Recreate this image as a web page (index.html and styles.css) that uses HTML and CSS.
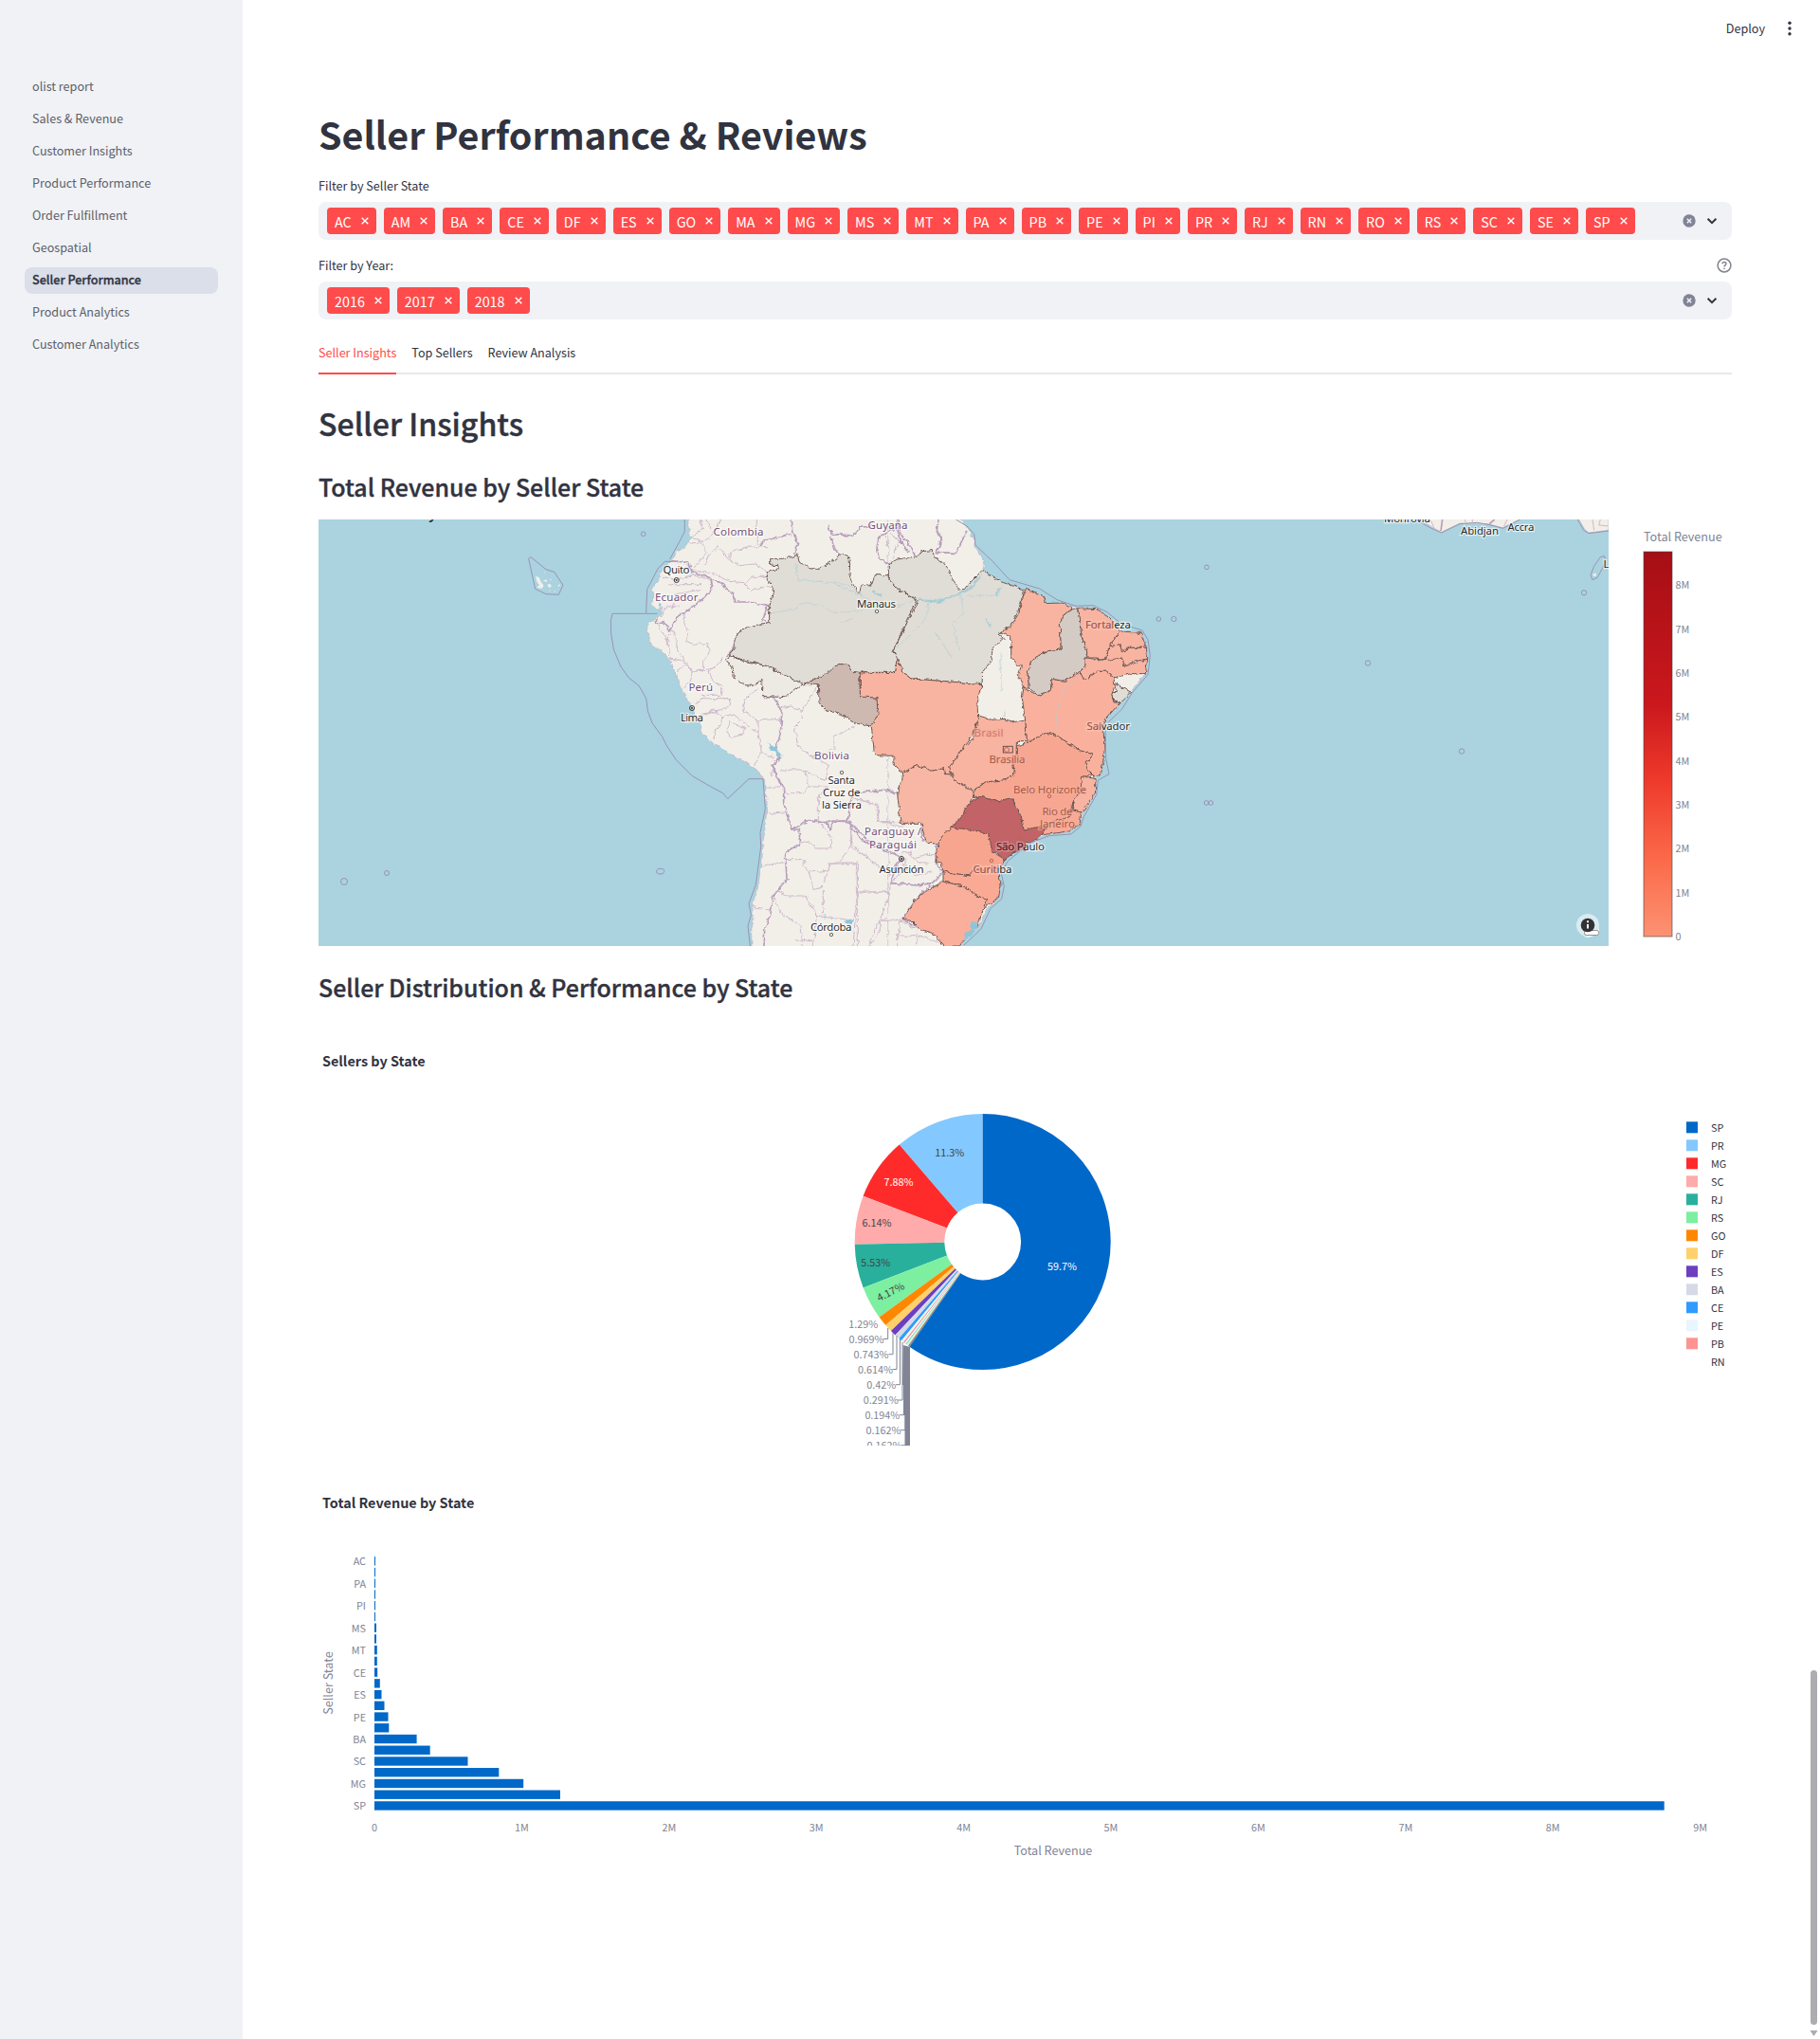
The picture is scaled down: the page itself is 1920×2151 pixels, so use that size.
FILE: index.html
```html
<!DOCTYPE html>
<html lang="en">
<head>
<meta charset="utf-8">
<title>Seller Performance</title>
<link rel="stylesheet" href="styles.css">
</head>
<body>
<div class="app">
  <nav class="sidebar">
    <a class="nav-item">olist report</a>
    <a class="nav-item">Sales &amp; Revenue</a>
    <a class="nav-item">Customer Insights</a>
    <a class="nav-item">Product Performance</a>
    <a class="nav-item">Order Fulfillment</a>
    <a class="nav-item">Geospatial</a>
    <a class="nav-item active">Seller Performance</a>
    <a class="nav-item">Product Analytics</a>
    <a class="nav-item">Customer Analytics</a>
  </nav>
  <div class="page">
    <header class="toolbar">
      <span class="deploy">Deploy</span>
      <svg class="dots" width="6" height="16" viewBox="0 0 6 16"><circle cx="3" cy="2.3" r="1.7"/><circle cx="3" cy="8" r="1.7"/><circle cx="3" cy="13.7" r="1.7"/></svg>
    </header>
    <main class="content">
      <h1>Seller Performance &amp; Reviews</h1>

      <div class="label">Filter by Seller State</div>
      <div class="select">
        <div class="tags" id="states"></div>
        <svg class="controls" width="40" height="16" viewBox="0 0 40 16"><circle class="clear" cx="8" cy="8" r="6.7"/><path class="clear-x" d="M5.8 5.8l4.4 4.4M10.2 5.8l-4.4 4.4"/><path class="chevron" d="M27.6 5.8l4.4 4.4 4.4-4.4"/></svg>
      </div>

      <div class="label year">Filter by Year:
        <svg width="16" height="16" viewBox="0 0 16 16"><circle class="help" cx="8" cy="8" r="6.9"/><path class="help" d="M6 6.3c0-2.6 4.1-2.5 4 0 0 1.500-2 1.500-2 3.100M8 10.700v1.300"/></svg>
      </div>
      <div class="select">
        <div class="tags" id="years"></div>
        <svg class="controls" width="40" height="16" viewBox="0 0 40 16"><circle class="clear" cx="8" cy="8" r="6.7"/><path class="clear-x" d="M5.8 5.8l4.400 4.400M10.200 5.800l-4.400 4.400"/><path class="chevron" d="M27.600 5.800l4.400 4.400 4.400-4.400"/></svg>
      </div>

      <div class="tabs"><span class="tab selected">Seller Insights</span><span class="tab">Top Sellers</span><span class="tab">Review Analysis</span></div>

      <h2>Seller Insights</h2>
      <h3>Total Revenue by Seller State</h3>

      <svg class="chart" width="1491" height="450" viewBox="0 0 1491 450">
        <defs>
          <clipPath id="mapclip"><rect width="1361" height="450"/></clipPath>
          <filter id="rough" x="-5%" y="-5%" width="110%" height="110%" color-interpolation-filters="sRGB"><feTurbulence type="fractalNoise" baseFrequency="0.06" numOctaves="3" seed="4"/><feDisplacementMap in="SourceGraphic" scale="15" xChannelSelector="R" yChannelSelector="G"/></filter>
          <linearGradient id="reds" x1="0" y1="1" x2="0" y2="0"><stop offset="0" stop-color="#fc9272"/><stop offset=".2" stop-color="#fb6a4a"/><stop offset=".4" stop-color="#ef3b2c"/><stop offset=".6" stop-color="#cb181d"/><stop offset="1" stop-color="#a50f15"/></linearGradient>
        </defs>
        <g clip-path="url(#mapclip)">
          <rect width="1361" height="450" fill="#aad3df"/>
          <text class="plot-title" x="4" y="0">Total Revenue by Seller State</text>
          <!-- Pacific side of the continent -->
          <g transform="translate(204 -8) scale(.33333)">
            <g filter="url(#rough)">
              <path class="land" d="M556 0L560 70 575 80 556 98 545 116 520 122 515 145 497 160 480 178 470 190 462 225 443 240 450 262 442 290 455 310 480 300 470 325 430 355 428 375 438 400 432 412 460 428 485 452 510 490 535 560 560 600 580 640 600 680 597 692 640 735 690 765 760 805 795 840 800 850 806 950 800 1010 790 1080 788 1130 778 1190 760 1240 765 1285 758 1330 760 1400H1220V0Z"/>
              <path class="province" d="M595 24L605 50 570 80 600 95 615 130 590 160 570 185 640 195 690 220 740 225 760 205 820 205M605 95L640 70 660 24M640 70L615 24M600 95L560 100M650 110L690 155 690 130 740 112 810 110M690 155L720 170 770 165 800 185 815 190M775 24V105M735 225L760 250 800 235 832 240M650 110L620 140 610 170M540 150L570 185M480 205L520 215 570 200 630 215M495 230H600M480 270L520 260 600 245M520 260L510 310M470 330L490 300 530 300M550 320L545 350 560 390 550 410 580 420 620 415 625 450 605 470 605 500 570 505 545 470 525 440 515 380 490 370M515 380L490 400 500 440 495 465 540 470M460 350L485 400 500 410M515 510L545 485 580 505 640 495 670 460M540 560L565 540 570 505M620 500L640 540 665 550 665 580 600 580M580 610L600 590 690 590 695 610 660 630 600 640M600 650L640 625 665 650 660 680 640 690 640 720M665 650L700 640 780 700 780 660 730 630 740 590 780 560M780 660L850 655M690 665L740 685 735 700 695 715 680 695ZM780 700L790 760 765 805M790 760L830 780 820 840M850 620L885 615 915 630 970 550M915 630L920 655 895 680 905 740 950 775 1000 760 1020 750 1020 710 1090 678M950 775L1000 800 990 850 930 820 900 815 850 820M930 820L940 870 920 890 870 890 830 815M940 870L1000 870 970 900 970 980 1010 1030 1010 1065 960 1065 940 1040 905 1050M805 870L850 870M810 955L870 950M788 1125L860 1105M865 1100L930 1100 920 1120 940 1140 1000 1135 980 1190 955 1195 940 1140M1000 1135L1010 1113 1093 1113V1203H1200M1073 1000V1055L1035 1110M1073 1055L1110 1080 1170 1130M845 1200L870 1215 930 1215 965 1280 1060 1290M830 1220L850 1268 915 1310 920 1374M965 1280L955 1374M985 1200L985 1270M1093 1203L1080 1374M1200 1280L1160 1300 1130 1374M765 1250L820 1260M900 1355H960M1080 905L1160 930 1160 980 1200 985"/>
              <path class="nation" d="M497 155L560 160 570 190 630 210 635 240 600 280 560 310 525 330 500 375 480 350 455 355 460 335M635 215L660 225 700 260 705 285 745 285 810 295 795 340 815 352 770 363 720 380 700 430 680 460M885 24L890 60 905 100 890 135M785 110L800 90 885 70M790 585L830 588 855 635 850 700 835 750 848 780 825 805 860 880 860 920 885 1005 910 1005 910 1050 865 1080 870 1160 825 1220 820 1270 800 1320 798 1374M885 1005L940 975 1000 985 1005 1005 1018 978 1060 978 1110 1040 1200 1080M1062 978L1080 890 1180 880 1220 900M1000 45L1015 70 1080 75 1100 50 1150 40M1010 75L1020 120 1040 135"/>
              <path class="lake" d="M812 732L830 740 850 765 858 775 842 775 832 755 815 750ZM1055 1292L1080 1288 1075 1305 1055 1305ZM985 1272L994 1275 990 1288ZM470 288L477 295 465 305Z"/>
            </g>
            <path class="sea-line" d="M547 24V62L530 95 500 150M508 157H484L462 180 428 245 425 320M460 322H318L313 345 314 385 322 435 345 490 370 525 402 550 425 590 430 630 445 670 475 710 490 740 520 785 570 835 630 870 668 890 683 908 750 845H795L802 940 786 1015 788 1060 772 1180 750 1240 757 1275 747 1310 754 1374"/>
            <path class="sea-line" d="M53 148L60 143 108 182 134 190 162 232 148 262 108 260 74 244ZM409 70a7 7 0 1 0 14 0a7 7 0 1 0-14 0ZM458 1136a11 8 0 1 0 24 3a11 8 0 1 0-24-3Z"/>
            <path fill="#f2efe9" d="M75 203l12 5 4 12 10 14-7 9-15-4 8-8-8-10ZM98 218l12-4 1 8ZM112 230l10-2 3 9-8 2ZM120 214l5-1v5ZM145 233l8-5-3 9ZM102 190l4 2-3 2ZM116 248h7v3ZM134 249l5 1-4 3Z"/>
          </g>
          <!-- Atlantic side with the Brazilian states -->
          <g transform="translate(544 -8) scale(.33333)">
            <g filter="url(#rough)">
              <path class="land" d="M170 0H380L430 58 445 100 455 130 478 155 470 185 490 200 530 222 540 232 600 245 660 262 670 290 755 300 830 308 870 335 915 378 970 382 990 430 994 465 985 510 940 568 905 605 862 655 852 670 853 760 845 830 828 845 826 890 790 950 778 985 750 1010 660 1025 610 1050 540 1100 525 1140 528 1180 520 1225 485 1255 460 1310 405 1360 398 1400H170Z"/>
              <path class="nation" d="M145 75L170 65 200 50 205 80 235 130M145 75L135 110 145 150 172 165M200 24L210 70 245 115 255 138M330 24L325 60 340 85 325 128 385 130 420 60M-20 978L50 980 105 1040 205 1090M165 880L200 890M275 985L280 1040 325 1050 320 1110 345 1140 310 1175 260 1182 180 1175 195 1120 213 1098M215 1290L275 1320M310 1175L250 1235 215 1290"/>
              <path class="province" d="M160 75L170 110M180 70L205 90 185 150M80 905L135 930 138 978 205 985M210 1080L240 1075 250 1095 290 1085 320 1085M225 1095V1130L260 1150 310 1140M235 1080L270 1110 300 1110M180 1175L165 1240 145 1290 210 1295 200 1340 280 1345 350 1370M200 1340V1374M145 1290V1330L110 1374M210 1295L260 1320 260 1374M175 985L210 1000 230 985M-20 1113H73V1374M73 1203H175M53 1000V1060L180 1150M215 1080L220 1140 180 1170"/>
              <path class="state" fill="#eceae3" d="M-335 455L-285 472-215 487-98 545-158 587-230 583-228 532-255 550-282 548-317 525-320 500-340 470Z"/>
              <path class="state" fill="#e0ddd6" d="M-202 148L-165 148-130 142-118 132-110 160-80 175-50 182-20 165 5 150 15 135 45 138 50 165 48 200 60 230 80 258 85 235 105 228 115 235 130 200 172 200 172 215 195 240 260 278 187 440 200 460 190 508 80 508 60 505 40 482 10 482 0 500-40 528-98 545-215 487-335 455-315 430-315 408-305 385-270 363-205 350-205 300-190 240-212 215-212 190-180 183-180 170-202 168Z"/>
              <path class="state" fill="#cdb9b0" d="M-98 545L-60 530-20 510 10 482 40 482 60 505 80 510 83 585 135 588 140 640 120 678 70 670 20 640-30 625-48 600-50 545Z"/>
              <path class="state" fill="#e0ddd6" d="M172 165L200 150 268 140 275 125 310 122 318 145 345 160 365 185 372 210 398 245 415 245 430 225 468 185 530 222 600 245 600 260 580 320 560 355 520 388 535 400 500 435 500 465 470 510 468 545 243 528 215 505 200 460 187 440 265 280 195 240 172 215Z"/>
              <path class="state orange" d="M520 388L560 360 585 320 600 260 608 245 640 255 660 265 668 290 720 288 755 302 722 330 715 355 718 435 680 440 625 470 615 500 615 560 600 555 580 515 592 485 580 490 560 455 560 395 530 385Z"/>
              <path class="state" fill="#d4cbc5" d="M770 305L755 308 722 330 715 355 718 435 680 440 625 470 612 510 620 560 645 582 685 565 690 530 730 535 775 508 795 490 800 440 785 400Z"/>
              <path class="state orange" d="M770 305L830 308 870 335 905 378 870 425 860 470 830 462 800 462 800 440 785 400Z"/>
              <path class="state orange" d="M905 378L970 382 988 430 935 430 910 440 905 420 870 425Z"/>
              <path class="state orange" d="M870 425L905 420 910 440 935 430 988 430 992 465 945 475 915 490 910 465 860 470Z"/>
              <path class="state orange" d="M795 462L860 470 912 462 918 490 992 465 985 512 940 512 885 525 860 505 830 505 795 530 775 508 795 490Z"/>
              <path class="state" fill="#e0ddd6" d="M885 540L938 570 905 603 885 600 878 580 893 565Z"/>
              <path class="state" fill="#f9b19d" d="M600 555L645 582 685 565 690 530 730 535 775 508 795 530 830 505 860 505 885 525 888 550 878 580 885 603 905 603 860 655 852 670 855 760 845 830 825 840 797 810 800 790 820 765 770 750 700 705 670 700 610 730 605 660 595 590Z"/>
              <path class="state orange" d="M82 510L190 508 200 460 215 505 243 528 468 545 455 590 458 650 440 700 400 760 370 800 368 830 345 830 345 810 310 820 265 803 218 825 190 800 188 772 128 770 118 680 138 640 135 588 82 585Z"/>
              <path class="state" fill="#f7b7a4" d="M218 825L265 803 310 820 345 810 350 830 368 830 380 850 442 885 440 905 400 970 370 1000 325 1050 292 1048 275 985 210 985 200 890 215 850Z"/>
              <path class="state orange" d="M458 645L500 658 540 655 565 665 605 660 610 725 580 725 580 765 565 785 570 830 545 848 480 855 442 880 380 850 365 810 395 765 440 715Z"/>
              <path class="state" fill="#f7a791" d="M442 905L445 880 480 855 545 848 570 830 565 785 580 765 580 740 610 730 670 700 700 705 770 750 820 765 800 790 797 810 820 832 785 840 785 880 755 920 745 965 700 985 620 1008 600 1005 590 960 572 940 570 910 510 915 458 900Z"/>
              <path class="state orange" d="M785 835L828 845 826 890 785 950 755 945 755 920 780 880Z"/>
              <path class="state" fill="#f9aa95" d="M745 965L755 945 783 950 778 985 750 1010 660 1022 650 1015 675 1000 655 995 700 980Z"/>
              <path class="state" fill="#c26367" d="M370 1000L400 970 425 925 458 900 510 915 565 905 575 940 592 960 600 1005 660 995 675 1003 640 1035 600 1055 540 1100 515 1080 500 1075 488 1020 430 1005Z"/>
              <path class="state" fill="#f8a58f" d="M370 1000L430 1005 488 1020 500 1075 540 1100 525 1130 440 1140 430 1152 345 1138 340 1112 322 1112 330 1050 345 1020Z"/>
              <path class="state" fill="#f9a994" d="M345 1138L430 1152 440 1135 525 1130 528 1185 518 1225 470 1255 480 1225 450 1215 410 1185 345 1170Z"/>
              <path class="state" fill="#f9af9b" d="M345 1170L410 1185 450 1215 482 1225 472 1255 455 1310 405 1360 398 1374 350 1374 315 1335 270 1320 240 1290 217 1290 250 1235 290 1200Z"/>
              <path class="lake" d="M432 1295L455 1300 440 1340 408 1358 415 1330 432 1320Z"/>
              <path class="river" d="M265 280H330L400 262 430 235 470 195M300 285L290 340 230 400 195 430M400 262L410 320 375 350 390 420 400 440M480 340L495 370M420 265L520 265 530 235M530 440L525 480 530 570M0 220L50 235 90 265 130 300 200 300 250 280M-200 320L-130 310-100 290-40 295 0 320 60 315 130 300M20 350L60 340M120 250L150 265M700 690L710 600 740 545 780 525"/>
              <path class="river thick" d="M270 278L330 285 370 268 430 245 462 205M480 338L492 365M122 250L150 265M525 240L510 265"/>
              <path class="river thin" d="M-120 165L-115 215-50 220 0 225 50 250 90 265M320 380L370 460M540 630V650"/>
            </g>
            <rect x="535" y="742" width="30" height="20" fill="none" stroke="#6d514d" stroke-width="3"/>
            <path class="sea-line" d="M385 24L420 45 443 70 447 105 500 155 555 215 650 243 705 278 765 298 820 296 865 318 910 355 975 375 993 405 1000 455 993 515 945 570 910 625 858 675 860 780 870 830 855 838 835 850 830 895 790 965 780 995 750 1020 680 1025 620 1048 550 1105 528 1140 538 1185 530 1225 495 1255 465 1320 410 1372"/>
            <g class="pin sea"><circle cx="1179" cy="175" r="7"/><circle cx="1027" cy="339" r="7"/><circle cx="1075" cy="339" r="8"/><circle cx="1178" cy="921" r="7"/><circle cx="1192" cy="921" r="7"/></g>
          </g>
          <g class="sea-pins"><circle cx="27" cy="382" r="3.500"/><circle cx="72" cy="373" r="2.500"/><circle cx="1107" cy="151.500" r="2.700"/><circle cx="1206" cy="244.500" r="2.700"/></g>
          <!-- African coast -->
          <g transform="translate(1094 -8) scale(.33333)">
            <path class="land" d="M200 20L245 50 272 64 330 36 420 38 465 50 530 20ZM705 20L725 55 738 66 801 58V20Z"/>
            <path class="sea-line" d="M200 30L240 52 272 66 330 38 385 34 420 40 467 52 520 24M703 24L722 58 738 68 801 60M775 143L788 140 792 160 765 208 750 215 744 200 755 172Z"/>
            <path class="nation" d="M275 24L270 60M440 24L424 38"/><path class="province" d="M345 24L350 35M370 24V35M750 24L755 58M775 24L770 42 801 45M220 24L240 30 250 55M480 24L470 45"/>
            <circle class="isle" cx="757" cy="199" r="5"/><circle cx="723" cy="256" r="8" fill="none" stroke="#9a92b3" stroke-width="3"/>
          </g>
          <g class="city">
            <text x="363.500" y="57" textLength="28">Quito</text><text x="568" y="92.500" textLength="41">Manaus</text>
            <text x="382" y="212.500" textLength="24">Lima</text><text x="537.500" y="278.500" textLength="28.500">Santa</text><text x="532" y="291.800" textLength="39.500">Cruz de</text><text x="531" y="305" textLength="42">la Sierra</text>
            <text x="519" y="434" textLength="43.500">Córdoba</text><text x="591.500" y="373" textLength="47">Asunción</text>
            <text x="1124" y="2.500" textLength="49">Monrovia</text><text x="1205" y="15.500" textLength="40">Abidjan</text><text x="1254.500" y="11.700" textLength="28">Accra</text><text x="1355.500" y="51">L</text>
            <text x="809" y="114.800" textLength="48">Fortaleza</text><text x="810.500" y="222.300" textLength="45.500">Salvador</text><text x="715" y="349" textLength="51">São Paulo</text><text x="690.500" y="373" textLength="41">Curitiba</text>
          </g>
          <clipPath id="c1"><rect x="800" y="95" width="38" height="30"/></clipPath>
          <clipPath id="c2"><rect x="690" y="355" width="27" height="30"/></clipPath>
          <clipPath id="c3"><rect x="800" y="205" width="27" height="30"/></clipPath>
          <clipPath id="c4"><rect x="710" y="335" width="36" height="30"/></clipPath>
          <g class="city tinted"><text x="809" y="114.800" textLength="48" clip-path="url(#c1)">Fortaleza</text><text x="707.500" y="256.500" textLength="38">Brasília</text><text x="733" y="288.500" textLength="77">Belo Horizonte</text><text x="763.500" y="311.500" textLength="32">Rio de</text><text x="761" y="325" textLength="37">Janeiro</text><text x="691.500" y="229" textLength="31" fill="#c97973">Brasil</text><text x="690.500" y="373" textLength="41" clip-path="url(#c2)">Curitiba</text><text x="810.500" y="222.300" textLength="45.500" clip-path="url(#c3)">Salvador</text></g>
          <text class="city dark" x="715" y="349" textLength="51" clip-path="url(#c4)">São Paulo</text>
          <g class="country">
            <text x="416.500" y="17.300" textLength="53">Colombia</text><text x="579.500" y="9.700" textLength="42">Guyana</text><text x="355" y="85.500" textLength="45.500">Ecuador</text><text x="390.500" y="181" textLength="25.500">Perú</text><text x="523" y="253" textLength="37">Bolivia</text><text x="576" y="333.300" textLength="60">Paraguay /</text><text x="581" y="346.800" textLength="50">Paraguái</text>
          </g>
          <g class="pin"><circle cx="377.700" cy="64" r="2.500"/><circle class="core" cx="377.700" cy="64" r="1"/><circle cx="394" cy="199" r="2.500"/><circle class="core" cx="394" cy="199" r="1"/><circle cx="615" cy="358" r="2.500"/><circle class="core" cx="615" cy="358" r="1"/><circle class="small" cx="589" cy="97" r="1.700"/><circle class="small" cx="552" cy="267" r="1.700"/><circle class="small" cx="541" cy="438" r="1.700"/></g>
          <g class="pin warm"><circle cx="726" cy="243" r="2.500"/><circle cx="771" cy="292" r="1.700"/><circle cx="740" cy="337" r="1.700"/><circle cx="710" cy="360" r="1.700"/></g>
          <circle cx="1339" cy="428" r="12" fill="#fff" opacity=".55"/><path fill="#fff" d="M1335 440a12 12 0 0 0 16-12v10z"/><rect x="1335.500" y="433.500" width="15" height="5" rx="2" fill="#fff" stroke="#777" stroke-width=".8"/>
          <circle cx="1339" cy="428" r="7.300" fill="#333"/><path stroke="#fff" stroke-width="2" d="M1339 427v4.500M1339 423.200v2"/>
        </g>
        <g class="axis">
          <text class="axis-title" x="1398" y="22.800">Total Revenue</text>
          <rect x="1398" y="34" width="30" height="406" fill="url(#reds)" stroke="#444" stroke-opacity=".6"/>
          <text x="1431.500" y="73">8M</text><text x="1431.500" y="119.800">7M</text><text x="1431.500" y="166">6M</text><text x="1431.500" y="212">5M</text><text x="1431.500" y="258.800">4M</text><text x="1431.500" y="305">3M</text><text x="1431.500" y="351">2M</text><text x="1431.500" y="397.800">1M</text><text x="1431.500" y="444">0</text>
        </g>
      </svg>

      <h3 class="second">Seller Distribution &amp; Performance by State</h3>

      <svg class="chart" width="1491" height="450" viewBox="336 1090 1491 450">
        <text class="plot-title" x="340" y="1125.300">Sellers by State</text>
        <g class="pie" id="pie" transform="translate(1036.700 1310) rotate(-90) scale(1 -1)"></g>
        <g clip-path="url(#pieclip)">
          <clipPath id="pieclip"><rect x="336" y="1090" width="1491" height="435"/></clipPath>
          <path fill="#808495" d="M952.700 1419l7.300 2V1525H954.500V1493H953V1461H952Z"/>
          <path class="leader" d="M936.700 1401v11.500H932M942 1406v22.700H937.500M946 1409v35.500H941.500M949.500 1413v47.700H945M952 1416v61H947M953.500 1420v72.700H949M955 1430v78.700H950M956 1430v94.700H951"/>
          <g class="axis pct"><text x="926.300" y="1401">1.29%</text><text x="932.500" y="1417">0.969%</text><text x="937.500" y="1433">0.743%</text><text x="942" y="1449">0.614%</text><text x="945.300" y="1465">0.42%</text><text x="947.600" y="1481">0.291%</text><text x="949.300" y="1497">0.194%</text><text x="950.500" y="1513">0.162%</text><text x="951.500" y="1529">0.162%</text></g>
          <g class="inside"><text x="1105" y="1340" fill="#fff">59.7%</text><text x="986.300" y="1220">11.3%</text><text x="932.500" y="1251" fill="#fff">7.88%</text><text x="909.500" y="1294">6.14%</text><text x="908.300" y="1336">5.53%</text><text transform="translate(927.500 1373.300) rotate(-27)">4.17%</text></g>
        </g>
        <g class="legend" id="legend"></g>
      </svg>

      <svg class="chart revenue" width="1491" height="450" viewBox="336 1556 1491 450">
        <text class="plot-title" x="340" y="1591.300">Total Revenue by State</text>
        <g id="bars"></g>
        <g class="axis"><text class="axis-title mid" x="1111" y="1956.500">Total Revenue</text><text class="axis-title mid" transform="translate(350.500 1775.500) rotate(-90)">Seller State</text></g>
      </svg>
    </main>
  </div>
  <svg class="scrollbar" width="9" height="390" viewBox="0 0 9 390"><rect x="1" width="7" height="374" rx="3.500"/><path d="M.500 380h8l-4 6Z"/></svg>
</div>
<script src="app.js"></script>
</body>
</html>
```
FILE: app.js
```js
const byId = id => document.getElementById(id);

function fillTags(id, values) {
  byId(id).innerHTML = values.map(v =>
    `<span class="tag">${v}<svg width="8" height="8" viewBox="0 0 8 8"><path d="M.7.700l6.600 6.600M7.300.700L.7 7.300"/></svg></span>`).join('');
}
fillTags('states', 'AC AM BA CE DF ES GO MA MG MS MT PA PB PE PI PR RJ RN RO RS SC SE SP'.split(' '));
fillTags('years', ['2016', '2017', '2018']);

// Slices run counter-clockwise from twelve o'clock, the largest one last.
const slices = [
  [11.3, '#83c9ff'], [7.88, '#ff2b2b'], [6.14, '#ffabab'], [5.53, '#29b09d'], [4.17, '#7defa1'],
  [1.29, '#ff8700'], [0.969, '#ffd16a'], [0.743, '#6d3fc0'], [0.614, '#d5dae5'], [0.42, '#309bff'],
  [0.291, '#e9f5ff'], [0.194, '#ff9292'], [0.162, '#ffffff'], [0.162, '#74dfc4'], [0.129, '#d9f7e3'],
  [0.1, '#ffc98a'], [0.206, '#8d8a86'], [59.7, '#0068c9']
];
let start = 0;
byId('pie').innerHTML = slices.map(([share, color]) => {
  const arc = `<circle r="87.700" pathLength="100" stroke="${color}" stroke-dasharray="${share} 100" stroke-dashoffset="${-start}"/>`;
  start += share;
  return arc;
}).join('');

const legend = [['SP', '#0068c9'], ['PR', '#83c9ff'], ['MG', '#ff2b2b'], ['SC', '#ffabab'], ['RJ', '#29b09d'],
  ['RS', '#7defa1'], ['GO', '#ff8700'], ['DF', '#ffd16a'], ['ES', '#6d3fc0'], ['BA', '#d5dae5'],
  ['CE', '#309bff'], ['PE', '#e9f5ff'], ['PB', '#ff9292'], ['RN', 'none']];
byId('legend').innerHTML = legend.map(([name, color], i) =>
  `<rect x="1779" y="${1183.3 + i * 19}" width="12" height="12" fill="${color}"/><text x="1805" y="${1194.3 + i * 19}">${name}</text>`).join('');

const widths = [1, 1, 1, 1, 1, 1, 2, 2, 2.8, 2.8, 3.2, 5.8, 7.5, 10.5, 14.5, 15.3, 44.6, 58.7, 98.5, 131.3, 157.2, 196, 1360.7];
const names = ['AC', 'PA', 'PI', 'MS', 'MT', 'CE', 'ES', 'PE', 'BA', 'SC', 'MG', 'SP'];
let bars = widths.map((w, i) =>
  `<rect x="395" y="${(1642.1 + i * 11.733).toFixed(2)}" width="${w}" height="9.400" fill="#0068c9"/>`).join('');
bars += '<g class="axis state-names">' + names.map((n, i) =>
  `<text x="386" y="${(1651.2 + i * 23.466).toFixed(1)}">${n}</text>`).join('') + '</g><g class="axis ticks">';
for (let i = 0; i < 10; i++) bars += `<text x="${395 + i * 155.4}" y="1932.300">${i ? i + 'M' : 0}</text>`;
byId('bars').innerHTML = bars + '</g>';
```
FILE: styles.css
```css
* { box-sizing: border-box; }
body { margin: 0; background: #fff; color: #31333f; font: 12.6px/20px "Noto Sans CJK SC", "Noto Sans", sans-serif; }
.app { display: flex; width: 1920px; height: 2151px; position: relative; overflow: hidden; }
.sidebar { width: 256px; background: #f0f2f6; padding: 78px 26px 0; display: flex; flex-direction: column; gap: 6px; }
.nav-item { height: 28px; line-height: 26px; padding: 0 8px; border-radius: 8px; color: #5d5f69; }
.nav-item.active { background: #dadfea; color: #31333f; font-weight: 500; -webkit-text-stroke: .3px #31333f; }
.page { flex: 1; }
.toolbar { height: 60px; display: flex; justify-content: flex-end; align-items: center; gap: 23px; padding-right: 29px; }
.deploy { height: 21px; }
.dots { fill: #31333f; }
.content { width: 1571px; padding-left: 80px; }
h1, h2, h3 { margin: 0; }
h1 { margin-top: 52px; height: 60px; line-height: 57px; font-size: 39.4px; font-weight: 700; }
h2 { margin-top: 29px; height: 48px; line-height: 45px; font-size: 32.1px; font-weight: 500; -webkit-text-stroke: .4px #31333f; }
h3 { margin-top: 24px; height: 38px; line-height: 35px; font-size: 24.95px; font-weight: 500; margin-bottom: 14px; -webkit-text-stroke: .35px #31333f; }
h3.second { margin: 26px 0 28px; }
.label { margin: 14px 0 7px; height: 20px; display: flex; justify-content: space-between; align-items: center; }
.label.year { margin-top: 17px; }
.help { fill: none; stroke: #83858c; stroke-width: 1.5; }
.select { height: 40px; border-radius: 8px; background: #f0f2f6; padding: 0 13px 0 9px; display: flex; justify-content: space-between; align-items: center; }
.tags { display: flex; gap: 8px; }
.tag { height: 28px; line-height: 27px; border-radius: 4px; background: #ff4b4b; color: #fff; font-size: 14.35px; padding: 0 8px; display: flex; align-items: center; gap: 10px; }
.tag path { stroke: #fff; stroke-width: 1.4; }
.clear { fill: #808495; }
.clear-x { stroke: #f0f2f6; stroke-width: 1.5; }
.chevron { fill: none; stroke: #31333f; stroke-width: 2; }
.tabs { display: flex; gap: 16px; height: 42px; margin-top: 16px; box-shadow: inset 0 -2px #e8e8ea; }
.tab { height: 42px; line-height: 37px; }
.tab.selected { color: #ff4b4b; box-shadow: inset 0 -2px #ff4b4b; }
.chart { display: block; }
.revenue { margin-top: 16px; }
.plot-title { font-size: 14.4px; font-weight: 700; fill: #31333f; }
.axis text { fill: #808495; font-size: 10.8px; }
.axis .axis-title { font-size: 12.6px; }
.axis .mid, .ticks text { text-anchor: middle; }
.state-names text, .pct text { text-anchor: end; }
.legend text { font-size: 10.8px; fill: #31333f; }
.pie circle { fill: none; stroke-width: 94.600; }
.inside text { font-size: 10.800px; fill: #444; }
.inside text[fill] { fill: #fff; }
.leader { fill: none; stroke: #808495; stroke-width: 1; }
.land { fill: #f2efe9; stroke: #b5a9bd; stroke-width: 1.500; }
.province { fill: none; stroke: #cdb8ca; stroke-width: 3; }
.nation { fill: none; stroke: #b79dba; stroke-width: 5; }
.state { stroke: #6d5552; stroke-width: 3; }
.orange { fill: #f8b4a0; }
.lake { fill: #8fc5da; }
.river { fill: none; stroke: #b3d0d5; stroke-width: 2; }
.river.thick { stroke: #a5ccd5; stroke-width: 6; }
.river.thin { stroke-width: 2.500; }
.sea-line { fill: none; stroke: #9a92b3; stroke-width: 3; }
.isle { fill: #f2efe9; }
.city, .country { font: 11.500px "Noto Sans", sans-serif; paint-order: stroke; stroke: #fff; stroke-opacity: .65; stroke-width: 2.500px; fill: #2a2a2a; }
.country { fill: #745079; }
.tinted { stroke: #f8ae99; stroke-opacity: .7; fill: #a55b4b; }
.dark { stroke: #c26367; fill: #5c2026; }
.pin circle { fill: none; stroke: #333; stroke-width: 1; }
.pin .core { fill: #333; stroke: none; }
.pin .small { fill: #fff; stroke: #666; }
.pin.warm circle { stroke: #b36a5a; fill: none; }
.pin.sea circle { stroke: #9a92b3; stroke-width: 3; }
.sea-pins circle { fill: none; stroke: #9a92b3; }
.scrollbar { position: absolute; right: 2px; top: 1762px; fill: #acacb1; }
```
